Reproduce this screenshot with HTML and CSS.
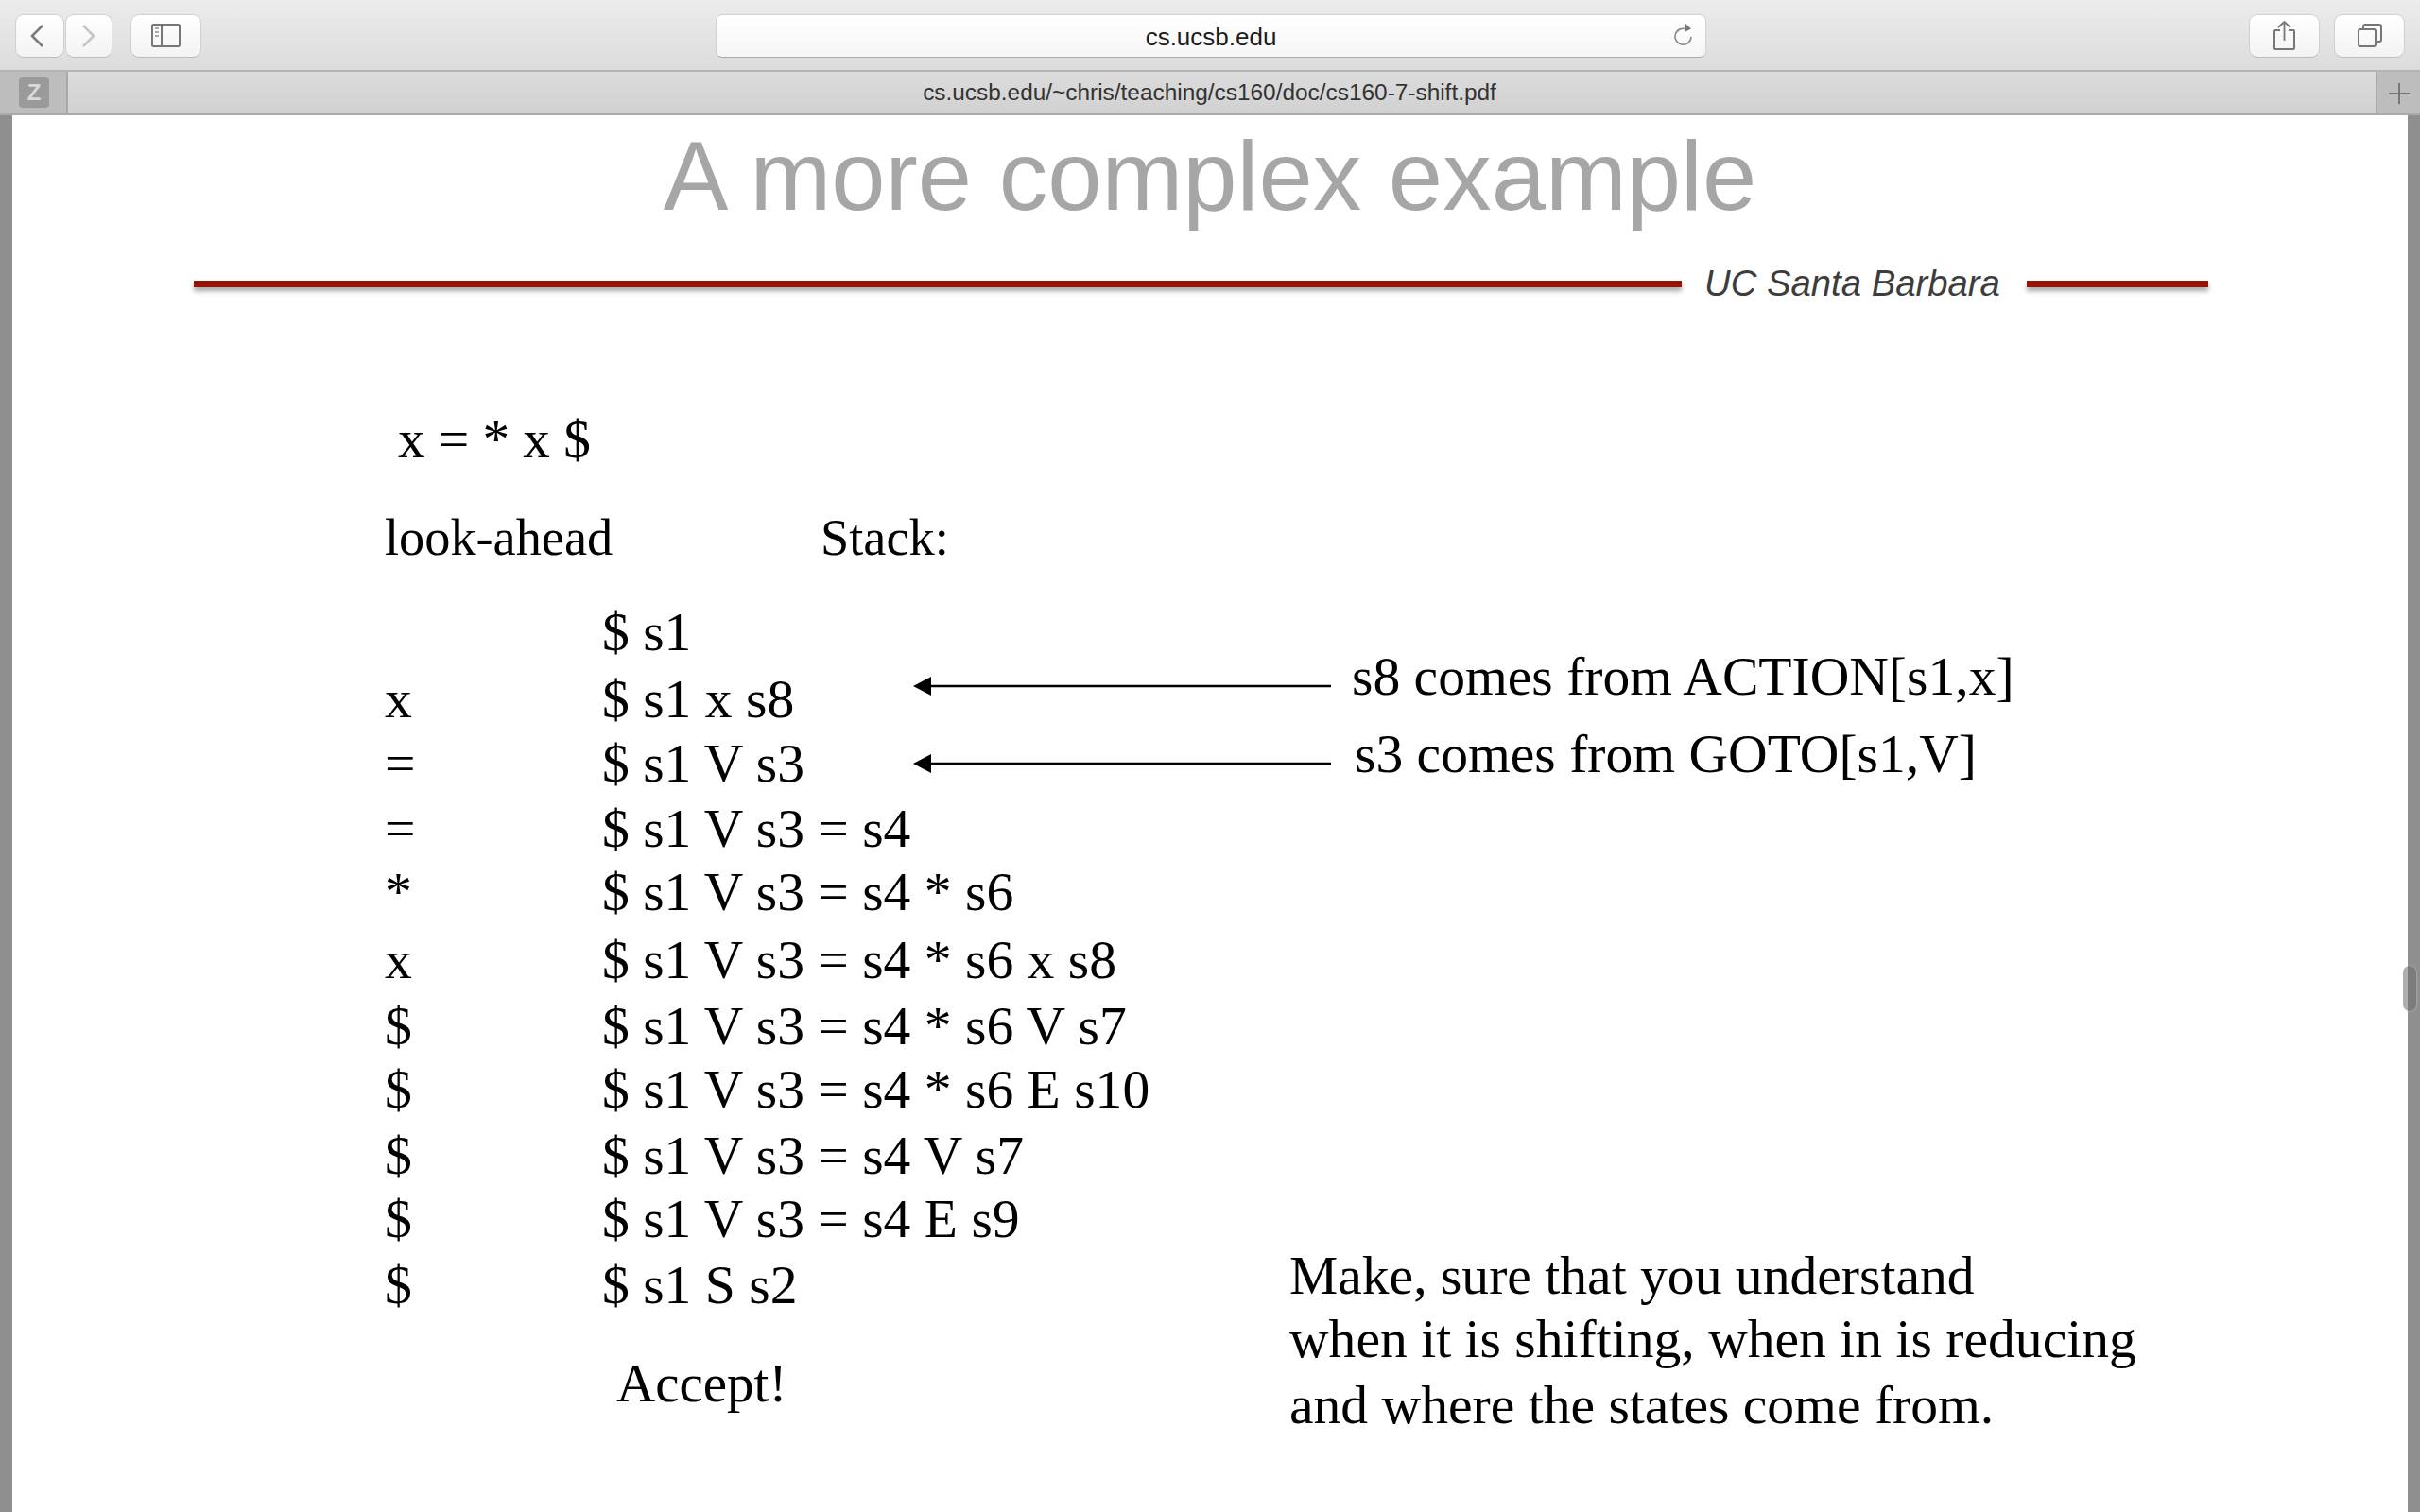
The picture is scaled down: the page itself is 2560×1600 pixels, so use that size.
FILE: index.html
```html
<!DOCTYPE html>
<html lang="en">
<head>
<meta charset="utf-8">
<title>cs160-7-shift.pdf</title>
<link rel="stylesheet" href="styles.css">
</head>
<body>
<div class="window">
  <header class="toolbar">
    <div class="nav-group">
      <div class="btn btn-nav"><svg class="back" width="16" height="26" viewBox="0 0 16 26"><path d="M14 2 3 13l11 11" fill="none" stroke="#7b7b7b" stroke-width="2.6"/></svg></div>
      <div class="btn btn-nav btn-fwd"><svg width="16" height="26" viewBox="0 0 16 26"><path d="m2 2 11 11L2 24" fill="none" stroke="#c6c6c6" stroke-width="2.6"/></svg></div>
      <div class="btn btn-wide btn-side"><svg width="32" height="26" viewBox="0 0 32 26"><rect x="1" y="1" width="29" height="23" rx="1.5" fill="none" stroke="#777" stroke-width="2"/><path d="M11 1v23" stroke="#777" stroke-width="2"/><path d="M4 5h4M4 9h4M4 13h4" stroke="#aaa" stroke-width="2"/></svg></div>
    </div>
    <div class="address">
      <span class="address-text">cs.ucsb.edu</span>
      <svg class="reload" width="20" height="28" viewBox="0 0 20 28"><path d="M14 8.500A8.500 8.500 0 1 0 18 16" fill="none" stroke="#8a8a8a" stroke-width="1.600"/><path d="M11 1l7 6.500-7 3.500z" fill="#777"/></svg>
    </div>
    <div class="actions">
      <div class="btn btn-wide"><svg width="24" height="32" viewBox="0 0 24 32"><path d="M7 10H2a1 1 0 0 0-1 1v18a1 1 0 0 0 1 1h19a1 1 0 0 0 1-1V11a1 1 0 0 0-1-1h-5" fill="none" stroke="#777" stroke-width="2"/><path d="M11.500 1v20M5 7l6.500-6L18 7" fill="none" stroke="#777" stroke-width="1.800"/></svg></div>
      <div class="btn btn-wide"><svg width="26" height="26" viewBox="0 0 26 26"><rect x="1" y="6" width="18" height="18" rx="2" fill="none" stroke="#777" stroke-width="2"/><path d="M6 5V3a2 2 0 0 1 2-2h15a2 2 0 0 1 2 2v14a2 2 0 0 1-2 2h-2" fill="none" stroke="#777" stroke-width="2"/></svg></div>
    </div>
  </header>
  <nav class="tabbar">
    <div class="pin"><span class="pin-badge">Z</span></div>
    <div class="tab-title">cs.ucsb.edu/~chris/teaching/cs160/doc/cs160-7-shift.pdf</div>
    <div class="new-tab"><svg width="22" height="22" viewBox="0 0 22 22"><path d="M11 0v22M0 11h22" stroke="#777" stroke-width="2"/></svg></div>
  </nav>
  <main class="viewer">
    <article class="slide">
      <h1 class="slide-title">A more complex example</h1>
      <div class="rule rule-left"></div>
      <div class="brand">UC Santa Barbara</div>
      <div class="rule rule-right"></div>

      <div class="t input">x = * x $</div>
      <div class="t h-look">look-ahead</div>
      <div class="t h-stack">Stack:</div>

      <div class="t c2 r1">$ s1</div>
      <div class="t c1 r2">x</div><div class="t c2 r2">$ s1 x s8</div>
      <div class="t c1 r3">=</div><div class="t c2 r3">$ s1 V s3</div>
      <div class="t c1 r4">=</div><div class="t c2 r4">$ s1 V s3 = s4</div>
      <div class="t c1 r5">*</div><div class="t c2 r5">$ s1 V s3 = s4 * s6</div>
      <div class="t c1 r6">x</div><div class="t c2 r6">$ s1 V s3 = s4 * s6 x s8</div>
      <div class="t c1 r7">$</div><div class="t c2 r7">$ s1 V s3 = s4 * s6 V s7</div>
      <div class="t c1 r8">$</div><div class="t c2 r8">$ s1 V s3 = s4 * s6 E s10</div>
      <div class="t c1 r9">$</div><div class="t c2 r9">$ s1 V s3 = s4 V s7</div>
      <div class="t c1 r10">$</div><div class="t c2 r10">$ s1 V s3 = s4 E s9</div>
      <div class="t c1 r11">$</div><div class="t c2 r11">$ s1 S s2</div>
      <div class="t accept">Accept!</div>

      <svg class="arrow arrow-1" width="444" height="20" viewBox="0 0 444 20"><path d="M0 10 19 0v20z" fill="#000"/><path d="M18 10h424" stroke="#000" stroke-width="2.500"/></svg>
      <svg class="arrow arrow-2" width="444" height="20" viewBox="0 0 444 20"><path d="M0 10 19 0v20z" fill="#000"/><path d="M18 10h424" stroke="#000" stroke-width="2.500"/></svg>
      <div class="t note-1">s8 comes from ACTION[s1,x]</div>
      <div class="t note-2">s3 comes from GOTO[s1,V]</div>

      <div class="t m1">Make, sure that you understand</div>
      <div class="t m2">when it is shifting, when in is reducing</div>
      <div class="t m3">and where the states come from.</div>
    </article>
  </main>
  <div class="scroll-thumb"></div>
</div>
</body>
</html>
```
FILE: styles.css
```css
* { box-sizing: border-box; }
html, body { margin: 0; padding: 0; }
body { width: 2560px; height: 1600px; overflow: hidden; background: #8f8f8f; font-family: "Liberation Sans", Arial, sans-serif; }
.window { position: relative; width: 2560px; height: 1600px; display: flex; flex-direction: column; }

.toolbar { height: 76px; flex: none; display: flex; align-items: flex-start; justify-content: space-between; padding: 15px 16px 0; background: linear-gradient(#ececec, #dcdcdc); border-bottom: 2px solid #b4b4b4; position: relative; }
.nav-group, .actions { display: flex; }
.btn { height: 46px; background: linear-gradient(#ffffff, #f3f3f3); border: 1px solid #d0d0d0; border-bottom-color: #bdbdbd; border-radius: 9px; display: flex; align-items: center; justify-content: center; }
.btn-nav { width: 52px; }
.back { margin-right: 6px; }
.btn-fwd { width: 50px; margin-left: 1px; }
.btn-wide { width: 75px; }
.btn-side { margin-left: 19px; }
.actions { gap: 15px; margin-right: 0; }
.address { position: absolute; left: 757px; top: 15px; width: 1048px; height: 46px; background: linear-gradient(#ffffff, #f6f6f6); border: 1px solid #d2d2d2; border-bottom-color: #ababab; border-radius: 7px; display: flex; align-items: center; justify-content: center; padding-top: 2px; }
.address-text { font-size: 26px; color: #1c1c1c; }
.reload { position: absolute; right: 13px; top: 7px; }

.tabbar { height: 46px; flex: none; display: flex; background: linear-gradient(#dcdcdc, #d1d1d1); border-bottom: 2px solid #a9a9a9; }
.pin { width: 72px; background: #bdbdbd; border-right: 2px solid #a9a9a9; display: flex; align-items: center; padding-left: 20px; }
.pin-badge { width: 32px; height: 32px; border-radius: 4px; background: #9a9a9a; color: #d9d9d9; font-weight: 700; font-size: 24px; display: flex; align-items: center; justify-content: center; }
.tab-title { flex: 1; text-align: center; font-size: 24.4px; line-height: 44px; color: #333; padding-right: 26px; white-space: nowrap; }
.new-tab { width: 47px; background: #bdbdbd; border-left: 2px solid #a9a9a9; display: flex; align-items: center; justify-content: center; padding-top: 2px; }

.viewer { flex: 1; padding: 0 13px; overflow: hidden; }
.slide { position: relative; height: 100%; background: #fff; font-family: "Liberation Serif", "Times New Roman", serif; color: #000; }

.slide-title { position: absolute; left: 0; right: 0; top: 10px; margin: 0; text-align: center; font: 400 103px/110px "Liberation Sans", Arial, sans-serif; color: #a6a6a6; white-space: nowrap; }
.rule { position: absolute; top: 175px; height: 7px; background: #971409; box-shadow: 0 4px 5px rgba(0,0,0,.35); }
.rule-left { left: 192px; width: 1574px; }
.rule-right { left: 2131px; width: 192px; }
.brand { position: absolute; left: 1790px; top: 155px; font: italic 400 38.3px/46px "Liberation Sans", Arial, sans-serif; color: #3d3d3d; white-space: nowrap; }

.t { position: absolute; font-size: 57.6px; line-height: 66px; white-space: nowrap; }
.c1 { left: 394px; }
.c2 { left: 624px; }
.input { left: 408px; top: 310px; font-size: 57.2px; }
.h-look { left: 394px; top: 414px; font-size: 54.3px; }
.h-stack { left: 855px; top: 414px; font-size: 54.3px; }
.r1 { top: 514px; }
.r2 { top: 585px; }
.r3 { top: 653px; }
.r4 { top: 722px; }
.r5 { top: 789px; }
.r6 { top: 861px; }
.r7 { top: 931px; }
.r8 { top: 998px; }
.r9 { top: 1068px; }
.r10 { top: 1135px; }
.r11 { top: 1205px; }
.accept { left: 639px; top: 1309px; font-size: 57px; }

.arrow { position: absolute; left: 953px; }
.arrow-1 { top: 594px; }
.arrow-2 { top: 676px; }
.note-1 { left: 1417px; top: 561px; }
.note-2 { left: 1420px; top: 643px; }
.m1 { left: 1351px; top: 1195px; }
.m2 { left: 1351px; top: 1262px; }
.m3 { left: 1351px; top: 1332px; }

.scroll-thumb { position: absolute; left: 2542px; top: 1022px; width: 14px; height: 48px; border-radius: 7px; background: rgba(110,110,110,.55); box-shadow: 0 0 2px rgba(255,255,255,.6); }
```
